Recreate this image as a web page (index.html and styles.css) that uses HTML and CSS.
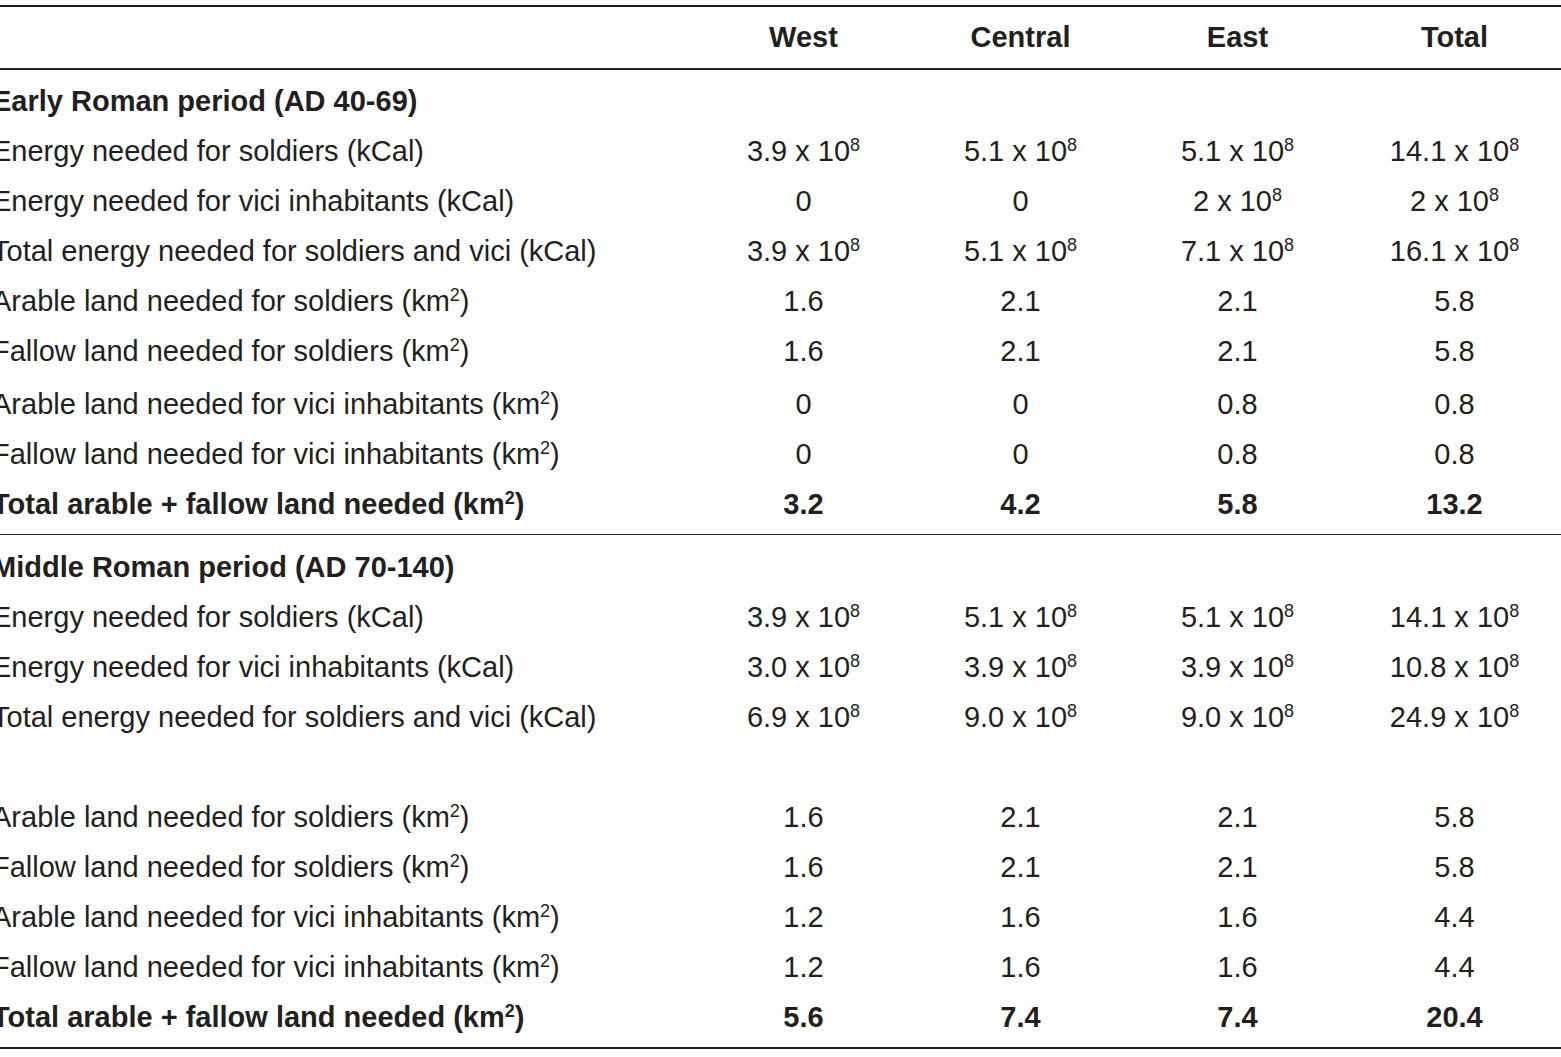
FILE: index.html
```html
<!DOCTYPE html>
<html lang="en">
<head>
<meta charset="utf-8">
<title>Land requirements</title>
<link rel="stylesheet" href="styles.css">
</head>
<body>
<table class="data">
  <colgroup>
    <col class="c-label">
    <col class="c-num"><col class="c-num"><col class="c-num"><col class="c-num">
  </colgroup>
  <thead>
    <tr><th class="h-label"></th><th>West</th><th>Central</th><th>East</th><th>Total</th></tr>
  </thead>
  <tbody>
    <tr class="section first"><td>Early Roman period (AD 40-69)</td><td></td><td></td><td></td><td></td></tr>
    <tr><td>Energy needed for soldiers (kCal)</td><td>3.9 x 10<span class="sup">8</span></td><td>5.1 x 10<span class="sup">8</span></td><td>5.1 x 10<span class="sup">8</span></td><td>14.1 x 10<span class="sup">8</span></td></tr>
    <tr><td>Energy needed for vici inhabitants (kCal)</td><td>0</td><td>0</td><td>2 x 10<span class="sup">8</span></td><td>2 x 10<span class="sup">8</span></td></tr>
    <tr><td>Total energy needed for soldiers and vici (kCal)</td><td>3.9 x 10<span class="sup">8</span></td><td>5.1 x 10<span class="sup">8</span></td><td>7.1 x 10<span class="sup">8</span></td><td>16.1 x 10<span class="sup">8</span></td></tr>
    <tr><td>Arable land needed for soldiers (km<span class="sup">2</span>)</td><td>1.6</td><td>2.1</td><td>2.1</td><td>5.8</td></tr>
    <tr><td>Fallow land needed for soldiers (km<span class="sup">2</span>)</td><td>1.6</td><td>2.1</td><td>2.1</td><td>5.8</td></tr>
    <tr class="spaced"><td>Arable land needed for vici inhabitants (km<span class="sup">2</span>)</td><td>0</td><td>0</td><td>0.8</td><td>0.8</td></tr>
    <tr><td>Fallow land needed for vici inhabitants (km<span class="sup">2</span>)</td><td>0</td><td>0</td><td>0.8</td><td>0.8</td></tr>
    <tr class="total divider"><td>Total arable + fallow land needed (km<span class="sup">2</span>)</td><td>3.2</td><td>4.2</td><td>5.8</td><td>13.2</td></tr>
    <tr class="section after-divider"><td>Middle Roman period (AD 70-140)</td><td></td><td></td><td></td><td></td></tr>
    <tr><td>Energy needed for soldiers (kCal)</td><td>3.9 x 10<span class="sup">8</span></td><td>5.1 x 10<span class="sup">8</span></td><td>5.1 x 10<span class="sup">8</span></td><td>14.1 x 10<span class="sup">8</span></td></tr>
    <tr><td>Energy needed for vici inhabitants (kCal)</td><td>3.0 x 10<span class="sup">8</span></td><td>3.9 x 10<span class="sup">8</span></td><td>3.9 x 10<span class="sup">8</span></td><td>10.8 x 10<span class="sup">8</span></td></tr>
    <tr><td>Total energy needed for soldiers and vici (kCal)</td><td>6.9 x 10<span class="sup">8</span></td><td>9.0 x 10<span class="sup">8</span></td><td>9.0 x 10<span class="sup">8</span></td><td>24.9 x 10<span class="sup">8</span></td></tr>
    <tr class="blank"><td>&nbsp;</td><td></td><td></td><td></td><td></td></tr>
    <tr><td>Arable land needed for soldiers (km<span class="sup">2</span>)</td><td>1.6</td><td>2.1</td><td>2.1</td><td>5.8</td></tr>
    <tr><td>Fallow land needed for soldiers (km<span class="sup">2</span>)</td><td>1.6</td><td>2.1</td><td>2.1</td><td>5.8</td></tr>
    <tr><td>Arable land needed for vici inhabitants (km<span class="sup">2</span>)</td><td>1.2</td><td>1.6</td><td>1.6</td><td>4.4</td></tr>
    <tr><td>Fallow land needed for vici inhabitants (km<span class="sup">2</span>)</td><td>1.2</td><td>1.6</td><td>1.6</td><td>4.4</td></tr>
    <tr class="total last"><td>Total arable + fallow land needed (km<span class="sup">2</span>)</td><td>5.6</td><td>7.4</td><td>7.4</td><td>20.4</td></tr>
  </tbody>
</table>
</body>
</html>
```

FILE: styles.css
```css
html, body {
  margin: 0;
  padding: 0;
  background: #ffffff;
  overflow: hidden;
}

body {
  font-family: "Liberation Sans", Arial, Helvetica, sans-serif;
  color: #231f20;
}

.data {
  border-collapse: separate;
  border-spacing: 0;
  table-layout: fixed;
  width: 1571px;
  margin: 5px 0 0 -8px;
  font-size: 29px;
}

.c-label { width: 703px; }
.c-num { width: 217px; }

.data th,
.data td {
  padding: 0;
  line-height: 50px;
  white-space: nowrap;
  vertical-align: top;
}

.data th {
  font-weight: bold;
  text-align: center;
  line-height: 61px;
  border-top: 2px solid #231f20;
  border-bottom: 2px solid #231f20;
}

.data td { text-align: center; }
.data td:first-child { text-align: left; }

.section td,
.total td { font-weight: bold; }

.first td { padding-top: 6px; }
.spaced td { padding-top: 3px; }

.divider td {
  padding-bottom: 5px;
  border-bottom: 1px solid #231f20;
}

.after-divider td { padding-top: 7px; }

.last td {
  padding-bottom: 5px;
  border-bottom: 2px solid #231f20;
}

.sup {
  font-size: 18px;
  line-height: 0;
  vertical-align: 10px;
}
```
